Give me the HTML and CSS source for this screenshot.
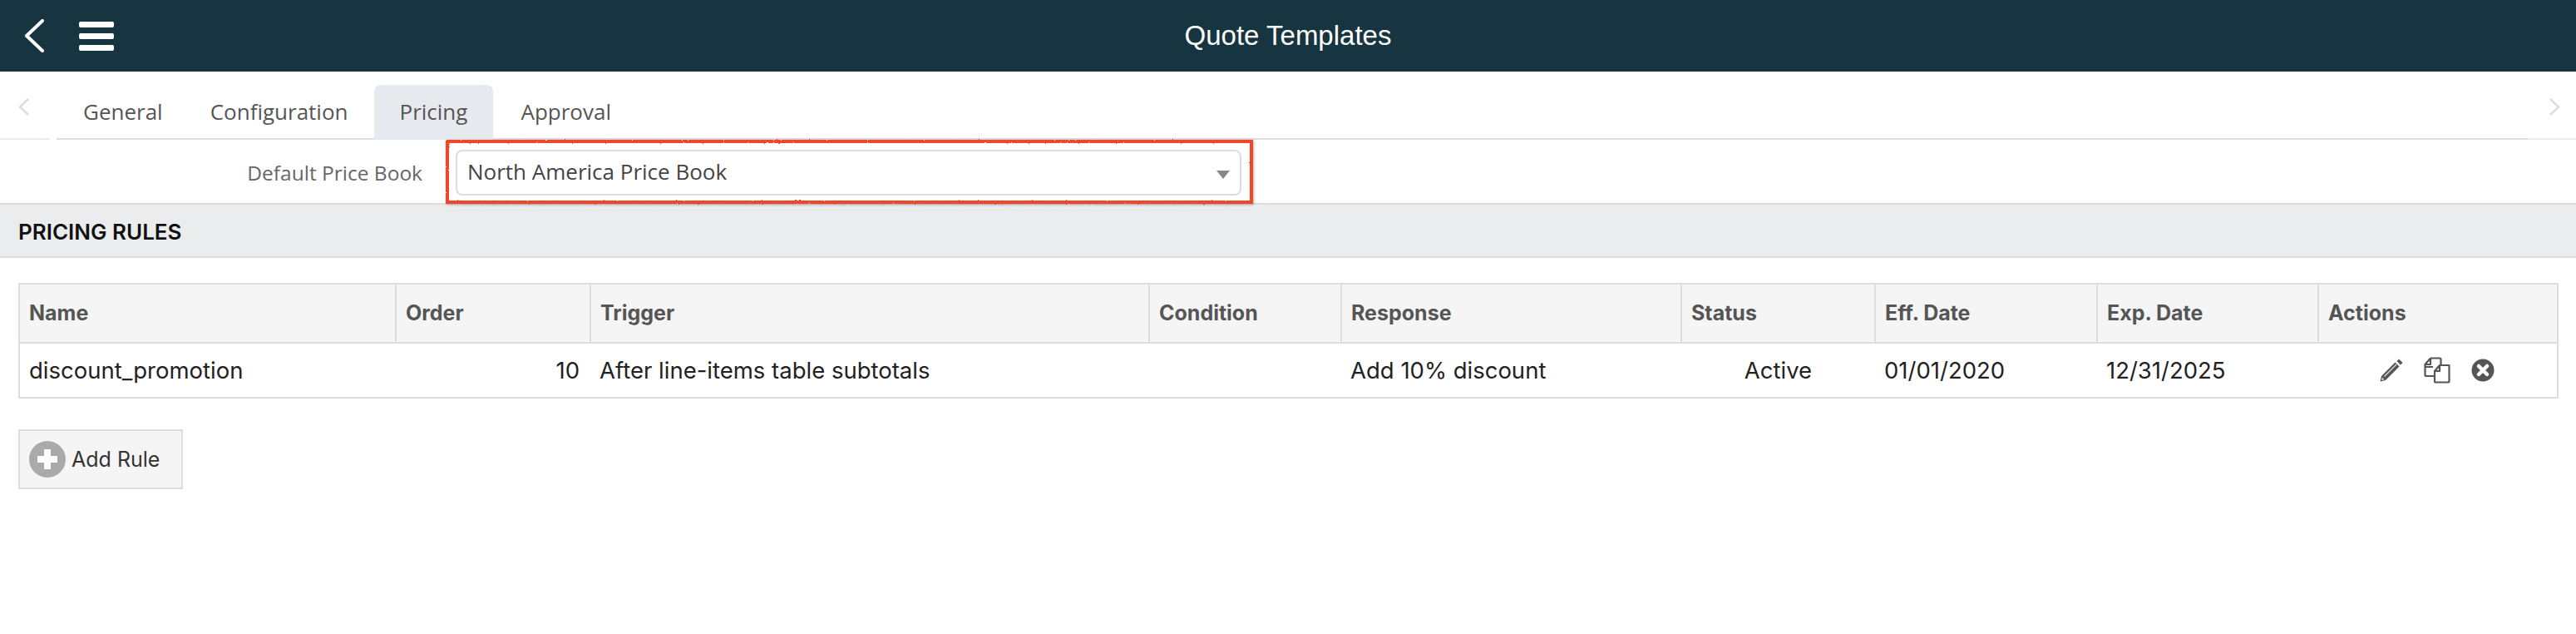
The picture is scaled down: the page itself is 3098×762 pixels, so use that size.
FILE: index.html
```html
<!DOCTYPE html>
<html lang="en">
<head>
    <meta charset="UTF-8">
    <title>Quote Templates</title>
    <link rel="stylesheet" href="styles.css">
</head>
<body>
    <!-- Rough edge for the hand-drawn annotation box -->
    <svg class="defs" width="0" height="0">
        <filter id="rough" x="-2%" y="-10%" width="104%" height="120%">
            <feTurbulence type="fractalNoise" baseFrequency="0.35" numOctaves="2" seed="4"/>
            <feDisplacementMap in="SourceGraphic" scale="2"/>
        </filter>
    </svg>

    <!-- Top bar -->
    <div class="topbar">
        <div class="topbar-icons">
            <svg class="back-icon" width="24" height="40" viewBox="0 0 24 40"><path d="M22 2 L3 20 L22 38" fill="none" stroke="#fff" stroke-width="4" stroke-linecap="round" stroke-linejoin="round"/></svg>
            <div class="menu-icon"><span></span><span></span><span></span></div>
        </div>
        <h1>Quote Templates</h1>
    </div>

    <!-- Tabs -->
    <div class="tabs">
        <div class="tab-arrow tab-arrow-left">
            <svg width="13" height="21" viewBox="0 0 13 21"><path d="M12 1 L2 10.5 L12 20" fill="none" stroke="#ddd" stroke-width="2.5"/></svg>
        </div>
        <div class="tab-list">
            <a class="tab tab-first">General</a>
            <a class="tab">Configuration</a>
            <a class="tab active">Pricing</a>
            <a class="tab tab-last">Approval</a>
        </div>
        <div class="tab-arrow tab-arrow-right">
            <svg width="13" height="21" viewBox="0 0 13 21"><path d="M1 1 L11 10.5 L1 20" fill="none" stroke="#ddd" stroke-width="2.5"/></svg>
        </div>
    </div>

    <!-- Price book -->
    <div class="form-row">
        <label class="form-label">Default Price Book</label>
        <div class="highlight">
            <div class="select-box">
                <span>North America Price Book</span>
                <span class="caret"></span>
            </div>
        </div>
    </div>

    <div class="section-title">PRICING RULES</div>

    <div class="content">
        <table class="rules">
            <colgroup>
                <col class="col-name"><col class="col-order"><col class="col-trigger"><col class="col-condition"><col class="col-response"><col class="col-status"><col class="col-eff"><col class="col-exp"><col>
            </colgroup>
            <thead>
                <tr>
                    <th>Name</th>
                    <th>Order</th>
                    <th>Trigger</th>
                    <th>Condition</th>
                    <th>Response</th>
                    <th>Status</th>
                    <th>Eff. Date</th>
                    <th>Exp. Date</th>
                    <th>Actions</th>
                </tr>
            </thead>
            <tbody>
                <tr>
                    <td>discount_promotion</td>
                    <td class="num">10</td>
                    <td>After line-items table subtotals</td>
                    <td></td>
                    <td>Add 10% discount</td>
                    <td class="center">Active</td>
                    <td>01/01/2020</td>
                    <td>12/31/2025</td>
                    <td>
                        <div class="actions">
                            <!-- pencil -->
                            <svg width="28" height="28" viewBox="0 0 28 28"><path d="M20.500 3 L23 0.500 L27.500 5 L25 7.500 Z M18.500 4.500 L23.500 9.500 L7 26 L0.500 27.500 L2 21 Z" fill="#555"/><path d="M5.500 21.500 L20 7" stroke="#ddd" stroke-width="1.200"/><path d="M2.800 22.500 L5.500 25.200 L2.200 26 Z" fill="#ddd"/></svg>
                            <!-- copy -->
                            <svg width="32" height="32" viewBox="0 0 32 32"><path d="M11 12 L1.500 12 L1.500 21.500 Q1.500 23 3 23 L13 23 M8 1.500 L19 1.500 Q20.500 1.500 20.500 3 L20.500 9 M8 1.500 L1.500 9 L1.500 12 M8 1.500 L8 9 L2 9" fill="none" stroke="#555" stroke-width="2.200" stroke-linejoin="round"/><path d="M19 10 L30.500 10 L30.500 29 Q30.500 30.500 29 30.500 L14.500 30.500 Q13 30.500 13 29 L13 17 Z M19 10 L19 17 L13 17" fill="#fff" stroke="#555" stroke-width="2.200" stroke-linejoin="round"/></svg>
                            <!-- remove -->
                            <svg width="28" height="28" viewBox="0 0 28 28"><circle cx="14" cy="14" r="13.500" fill="#555"/><path d="M9 9 L19 19 M19 9 L9 19" stroke="#fff" stroke-width="4.500" stroke-linecap="round"/></svg>
                        </div>
                    </td>
                </tr>
            </tbody>
        </table>

        <button class="add-btn">
            <svg width="44" height="44" viewBox="0 0 44 44"><circle cx="22" cy="22" r="22" fill="#aaa"/><path d="M22 10 V34 M10 22 H34" stroke="#fff" stroke-width="8"/></svg>
            <span>Add Rule</span>
        </button>
    </div>
</body>
</html>
```

FILE: styles.css
```css
* {
    margin: 0;
    padding: 0;
    box-sizing: border-box;
}

body {
    font-family: "Open Sans", Arial, sans-serif;
    background-color: #ffffff;
    color: #222;
}

.defs {
    position: absolute;
}

/* Top bar */
.topbar {
    height: 86px;
    background-color: #173540;
    display: flex;
    align-items: center;
    position: relative;
}

.topbar h1 {
    flex: 1;
    text-align: center;
    font-family: "Liberation Sans", Arial, sans-serif;
    font-size: 33px;
    font-weight: normal;
    color: #ffffff;
    margin-right: 137px;
}

.topbar-icons {
    width: 137px;
    display: flex;
    align-items: center;
    justify-content: space-between;
    padding-left: 29px;
}

.menu-icon {
    width: 42px;
    display: flex;
    flex-direction: column;
    gap: 7px;
}

.menu-icon span {
    height: 7px;
    background-color: #ffffff;
    border-radius: 2px;
}

/* Tabs */
.tabs {
    height: 82px;
    display: flex;
}

.tab-arrow {
    display: flex;
    align-items: center;
    padding-top: 5px;
    border-bottom: 2px solid #e6e9ed;
}

.tab-arrow-left {
    width: 60px;
    padding-left: 22px;
    margin-right: 8px;
}

.tab-arrow-right {
    width: 58px;
    padding-left: 26px;
}

.tab-list {
    flex: 1;
    display: flex;
    align-items: flex-end;
    border-bottom: 2px solid #ddd;
}

.tab {
    height: 66px;
    line-height: 64px;
    padding: 0 31px;
    font-size: 26px;
    color: #555;
    border-radius: 8px 8px 0 0;
    margin-bottom: -2px;
}

.tab-first {
    padding: 0 26px 0 32px;
}

.tab-last {
    padding-left: 33px;
}

.tab.active {
    background-color: #e6e9ed;
    padding: 0 31px;
}

/* Price book row */
.form-row {
    height: 76px;
    display: flex;
}

.form-label {
    width: 508px;
    text-align: right;
    font-size: 24.500px;
    line-height: 80px;
    color: #666;
}

.highlight {
    width: 971px;
    height: 77px;
    margin-left: 28px;
    padding: 9px 10px;
    position: relative;
    z-index: 1;
    background-color: #ffffff;
}

.highlight::before {
    content: "";
    position: absolute;
    top: 0;
    left: 0;
    right: 0;
    bottom: 0;
    border: 4px solid #f0472a;
    box-shadow: 1px 1px 3px rgba(0, 0, 0, 0.3);
    filter: url(#rough);
}

.select-box {
    height: 55px;
    margin-top: 3px;
    margin-left: 2px;
    margin-right: 4px;
    border: 2px solid #ddd;
    border-radius: 8px;
    display: flex;
    align-items: center;
    justify-content: space-between;
    padding: 0 12px 4px;
    font-size: 26px;
    color: #444;
}

.caret {
    width: 0;
    height: 0;
    border-left: 8px solid transparent;
    border-right: 8px solid transparent;
    border-top: 10px solid #888;
    margin-top: 8px;
}

/* Section band */
.section-title {
    height: 66px;
    line-height: 66px;
    padding-left: 22px;
    background-color: #ebecee;
    border-top: 2px solid #ddd;
    border-bottom: 2px solid #ddd;
    font-family: Inter, Arial, sans-serif;
    font-size: 26px;
    font-weight: 600;
    color: #111;
}

.content {
    padding: 30px 21px 0 22px;
    font-family: Inter, Arial, sans-serif;
}

/* Rules table */
.rules {
    width: 100%;
    table-layout: fixed;
    border-collapse: collapse;
}

.col-name { width: 453px; }
.col-order { width: 234px; }
.col-trigger { width: 672px; }
.col-condition { width: 231px; }
.col-response { width: 409px; }
.col-status { width: 233px; }
.col-eff { width: 267px; }
.col-exp { width: 266px; }

.rules th {
    height: 71px;
    background-color: #f5f5f5;
    border: 2px solid #ddd;
    text-align: left;
    padding: 0 11px 2px;
    font-size: 25px;
    font-weight: 700;
    color: #555;
}

.rules td {
    height: 66px;
    padding: 0 11px;
    font-size: 27.500px;
    color: #222;
}

.rules tbody tr {
    border: 2px solid #dadde0;
    border-top: 0;
}

.rules td.num {
    text-align: right;
    padding-right: 13px;
}

.center {
    text-align: center;
}

.actions {
    display: flex;
    align-items: center;
    justify-content: center;
    gap: 25px;
    padding-right: 2px;
}

/* Add button */
.add-btn {
    width: 198px;
    height: 72px;
    margin-top: 37px;
    display: flex;
    align-items: center;
    gap: 7px;
    padding-left: 11px;
    background-color: #f5f5f5;
    border: 2px solid #ddd;
    font-family: inherit;
    font-size: 25px;
    color: #333;
}
```
